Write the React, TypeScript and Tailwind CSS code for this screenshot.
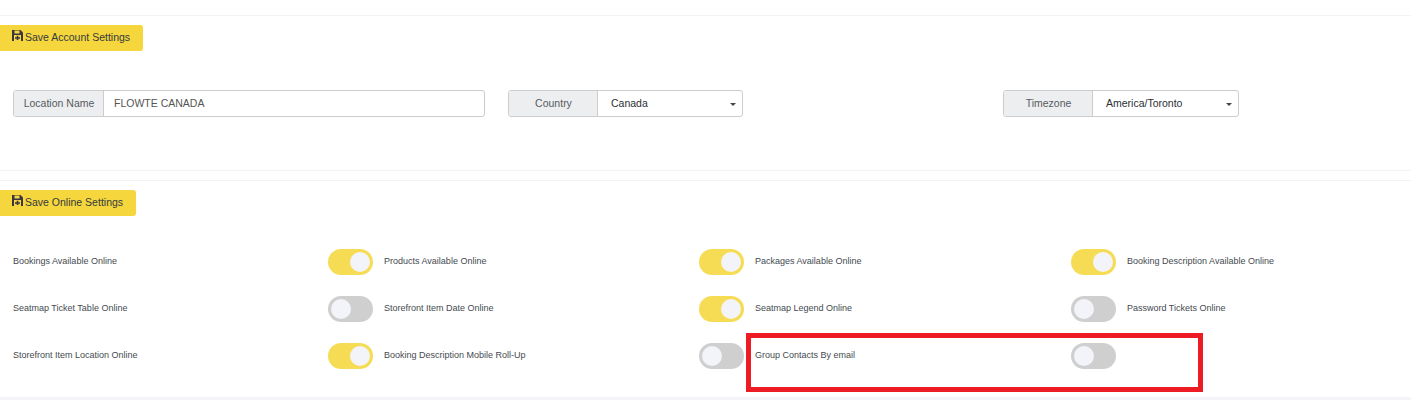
const toggles = [
  { label: "Bookings Available Online", on: true },
  { label: "Products Available Online", on: true },
  { label: "Packages Available Online", on: true },
  { label: "Booking Description Available Online" },
  { label: "Seatmap Ticket Table Online", on: false },
  { label: "Storefront Item Date Online", on: true },
  { label: "Seatmap Legend Online", on: false },
  { label: "Password Tickets Online" },
  { label: "Storefront Item Location Online", on: true },
  { label: "Booking Description Mobile Roll-Up", on: false },
  { label: "Group Contacts By email", on: false },
]

function SaveIcon() {
  return (
    <svg width="11" height="11" viewBox="0 0 11 11" className="mb-[5px] mr-[2px] shrink-0">
      <path d="M0 0h8.5L11 2.5V11H0z" fill="#3b3540" />
      <rect x="2.5" y="0.5" width="5" height="3" fill="#f5d63d" />
      <rect x="2" y="5" width="7" height="6" fill="#f5d63d" />
      <path d="M4.7 5.7h1.6v1.6H8v1.4H6.3v1.3H4.7V8.7H3V7.3h1.7z" fill="#3b3540" />
    </svg>
  )
}

function SaveButton({ label, width }: { label: string; width: string }) {
  return (
    <button type="button" className={`flex h-[26px] items-center justify-start whitespace-nowrap rounded-r-[3px] bg-[#f5d63d] pl-3 text-[10.5px] text-[#333a40] ${width}`}>
      <SaveIcon />
      {label}
    </button>
  )
}

function Field({ label, value, className, labelWidth, select }: { label: string; value: string; className: string; labelWidth: string; select?: boolean }) {
  return (
    <div className={`flex h-[27px] overflow-hidden rounded-[3px] border border-[#cccccc] text-[10.5px] ${className}`}>
      <div className={`flex shrink-0 items-center justify-center border-r border-[#cccccc] bg-[#edeef0] pl-[1px] text-[#555b60] ${labelWidth}`}>
        {label}
      </div>
      <div className={`flex flex-1 items-center justify-between pr-[6px] ${select ? "pl-[13px] text-[#2b2f33]" : "pl-[10px] text-[#555555]"}`}>
        {value}
        {select && <span className="mt-[1px] h-0 w-0 border-x-[3px] border-t-[3px] border-x-transparent border-t-[#444444]" />}
      </div>
    </div>
  )
}

function Switch({ on }: { on: boolean }) {
  return (
    <div className={`flex h-[26px] w-[45px] shrink-0 items-center rounded-full px-[3px] ${on ? "justify-end bg-[#f6dc55]" : "justify-start bg-[#cfcfcf]"}`}>
      <div className="h-5 w-5 rounded-full bg-[#f3f4f9]" />
    </div>
  )
}

export default function App() {
  return (
    <div className="relative h-[400px] w-[1411px] overflow-hidden bg-white font-['Liberation_Sans',Arial,sans-serif]">
      <div className="h-[16px] border-b border-[#f3f3f5]" />
      <div className="pt-[9px]">
        <SaveButton label="Save Account Settings" width="w-[143px]" />
      </div>
      <div className="flex pl-[13px] pt-[39px]">
        <Field label="Location Name" value="FLOWTE CANADA" className="w-[472px]" labelWidth="w-[90px]" />
        <Field label="Country" value="Canada" className="ml-[23px] w-[235px]" labelWidth="w-[89px]" select />
        <Field label="Timezone" value="America/Toronto" className="ml-[260px] w-[236px]" labelWidth="w-[89px]" select />
      </div>
      <div className="mt-[53px] h-[11px] border-y border-[#f3f3f5]" />
      <div className="pt-[9px]">
        <SaveButton label="Save Online Settings" width="w-[136px]" />
      </div>
      <div className="grid grid-cols-[371px_371px_372px_340px] gap-y-[21px] pl-[13px] pt-[33px]">
        {toggles.map((t) => (
          <div key={t.label} className="flex h-[26px] items-center justify-between pr-[11px] text-[9px] text-[#444a50]">
            <span>{t.label}</span>
            {t.on !== undefined && <Switch on={t.on} />}
          </div>
        ))}
      </div>
      <div className="absolute bottom-0 left-0 h-[3px] w-full bg-[#f4f5f9]" />
      <div className="absolute left-[746px] top-[333px] h-[59px] w-[457px] border-[5px] border-[#ed1c24]" />
    </div>
  )
}
